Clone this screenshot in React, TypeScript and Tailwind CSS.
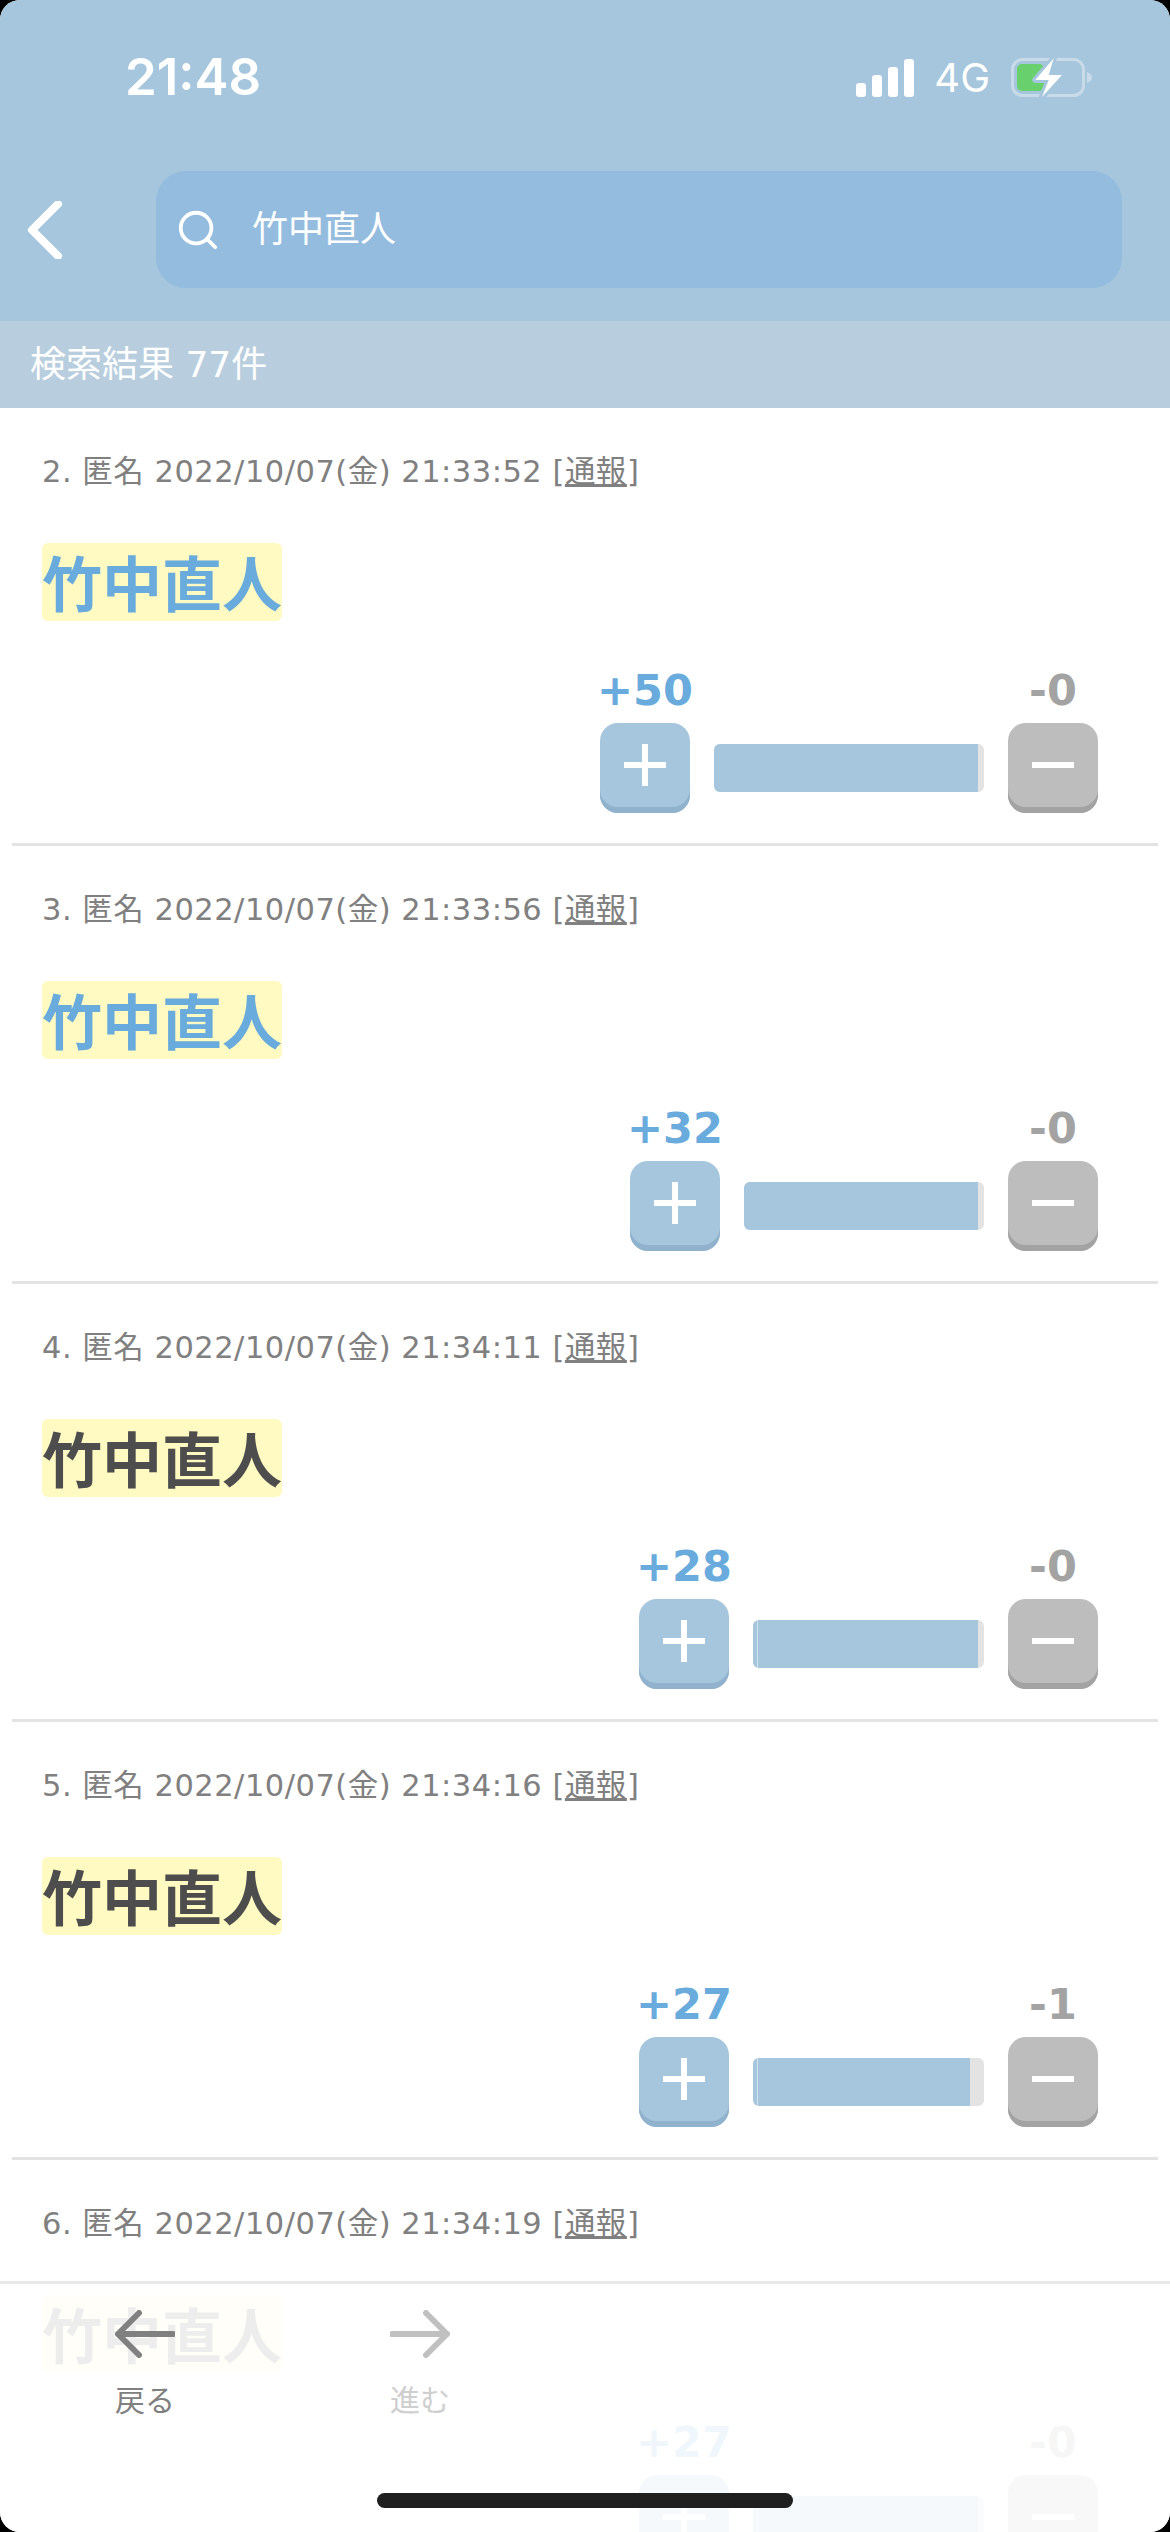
import { Search } from "lucide-react";

type Post = {
  no: number;
  time: string;
  up: number;
  down: number;
  blue: boolean;
  seam: boolean;
  barWidth: string;
  fillWidth: string;
};

const posts: Post[] = [
  { no: 2, time: "21:33:52", up: 50, down: 0, blue: true, seam: false, barWidth: "w-[270px]", fillWidth: "w-[264px]" },
  { no: 3, time: "21:33:56", up: 32, down: 0, blue: true, seam: false, barWidth: "w-[240px]", fillWidth: "w-[234px]" },
  { no: 4, time: "21:34:11", up: 28, down: 0, blue: false, seam: true, barWidth: "w-[231px]", fillWidth: "w-[225px]" },
  { no: 5, time: "21:34:16", up: 27, down: 1, blue: false, seam: true, barWidth: "w-[231px]", fillWidth: "w-[217px]" },
  { no: 6, time: "21:34:19", up: 27, down: 0, blue: false, seam: true, barWidth: "w-[231px]", fillWidth: "w-[225px]" },
];

const jp = "font-['DejaVu_Sans','Noto_Sans_CJK_JP',sans-serif]";

const StatusBar = () => (
  <div className="flex h-[171px] items-start justify-between pl-[125px] pr-[78px] pt-[51px] text-white">
    <span className="font-['Inter',sans-serif] text-[51px] leading-[52px] font-semibold">21:48</span>
    <div className="mt-[6px] flex items-center">
      <svg width="58" height="38" viewBox="0 0 58 38" fill="#fff">
        <rect x="0" y="24" width="10" height="14" rx="3" />
        <rect x="16" y="16" width="10" height="22" rx="3" />
        <rect x="32" y="8" width="10" height="30" rx="3" />
        <rect x="48" y="0" width="10" height="38" rx="3" />
      </svg>
      <span className="ml-[20px] font-['Inter',sans-serif] text-[40px] leading-[40px]">4G</span>
      <svg className="ml-[21px]" width="81" height="42" viewBox="0 0 81 42">
        <rect x="1.5" y="2.5" width="71" height="36" rx="10" fill="none" stroke="#c9dae8" strokeWidth="3" />
        <path d="M76 15c3 1 5 3 5 5.500s-2 4.500-5 5.500z" fill="#c9dae8" />
        <rect x="6" y="7" width="27" height="27" rx="5" fill="#68d06c" />
        <path
          d="M42.700 1.300 24.300 23h13.400L31 40l20-22H37.700z"
          fill="#fff"
          stroke="#a5c6dd"
          strokeWidth="6"
          strokeLinejoin="round"
          paintOrder="stroke"
        />
      </svg>
    </div>
  </div>
);

const SearchHeader = () => (
  <div className="flex h-[150px] items-start pl-[27px] pr-[48px]">
    <svg className="mt-[30px]" width="36" height="58" viewBox="0 0 36 58" fill="none">
      <path d="M31 3 5 29l26 26" stroke="#fff" strokeWidth="8" strokeLinecap="round" strokeLinejoin="round" />
    </svg>
    <div className="ml-[93px] flex h-[117px] flex-1 items-center rounded-[30px] bg-[#93bcde] pl-[19px]">
      <Search className="text-white" size={46} strokeWidth={2} />
      <span className={`ml-[31px] text-[36px] text-white ${jp}`}>竹中直人</span>
    </div>
  </div>
);

const Vote = ({ post }: { post: Post }) => (
  <div className="flex items-end justify-end pr-[60px]">
    <div className="flex w-[90px] flex-col items-center">
      <span className="whitespace-nowrap font-['DejaVu_Sans',sans-serif] text-[43px] leading-[50px] font-bold text-[#68abdc]">
        +{post.up}
      </span>
      <div className="mt-[8px] flex h-[90px] w-[90px] items-center justify-center rounded-[18px] bg-[#a5c6dd] pb-[6px] shadow-[inset_0_-6px_0_#90b2cc]">
        <svg width="42" height="42" viewBox="0 0 42 42" fill="#fff">
          <rect x="0" y="18" width="42" height="6" />
          <rect x="18" y="0" width="6" height="42" />
        </svg>
      </div>
    </div>
    <div className={`mx-[24px] mb-[21px] h-[48px] overflow-hidden rounded-[6px] bg-[#e3e3e3] ${post.barWidth}`}>
      <div className={`h-full bg-[#a5c6dd] ${post.fillWidth}`}>
        {post.seam && <div className="h-full w-[5px] border-r border-white/50" />}
      </div>
    </div>
    <div className="flex w-[90px] flex-col items-center">
      <span className="font-['DejaVu_Sans',sans-serif] text-[43px] leading-[50px] font-bold text-[#a3a3a3]">
        -{post.down}
      </span>
      <div className="mt-[8px] flex h-[90px] w-[90px] items-center justify-center rounded-[18px] bg-[#bdbdbd] pb-[6px] shadow-[inset_0_-6px_0_#a3a3a3]">
        <div className="h-[6px] w-[42px] bg-white" />
      </div>
    </div>
  </div>
);

const PostRow = ({ post }: { post: Post }) => (
  <div className="mx-[12px] h-[438px] shrink-0 border-b-[3px] border-[#e3e3e3] pl-[30px] pt-[44px]">
    <p className={`whitespace-nowrap text-[30.500px] leading-[40px] tracking-[0.5px] text-[#808080] ${jp}`}>
      {post.no}. 匿名 2022/10/07(金) {post.time} [<span className="underline">通報</span>]
    </p>
    <div className="mt-[51px] h-[78px] w-[240px] rounded-[6px] bg-[#fff9c2]">
      <span
        className={`block whitespace-nowrap font-['Noto_Sans_CJK_JP',sans-serif] text-[60px] leading-[76px] font-bold ${post.blue ? "text-[#68abdc]" : "text-[#4d4d4d]"}`}
      >
        竹中直人
      </span>
    </div>
    <div className="mt-[44px] -ml-[30px]">
      <Vote post={post} />
    </div>
  </div>
);

const BottomNav = () => (
  <div className="absolute inset-x-0 bottom-0 h-[251px] border-t-[3px] border-[#e8e8e8] bg-white/90">
    <div className="flex pl-[115px] pt-[26px]">
      <div className="flex w-[60px] flex-col items-center">
        <svg width="60" height="48" viewBox="0 0 60 48" fill="none" stroke="#808080" strokeWidth="6" strokeLinecap="round" strokeLinejoin="round">
          <path d="M24 3 3 24l21 21M3 24h55" />
        </svg>
        <span className={`mt-[23px] whitespace-nowrap text-[30px] leading-[40px] text-[#808080] ${jp}`}>戻る</span>
      </div>
      <div className="ml-[215px] flex w-[60px] flex-col items-center">
        <svg width="60" height="48" viewBox="0 0 60 48" fill="none" stroke="#c0c0c0" strokeWidth="6" strokeLinecap="round" strokeLinejoin="round">
          <path d="m36 3 21 21-21 21M57 24H2" />
        </svg>
        <span className={`mt-[23px] whitespace-nowrap text-[30px] leading-[40px] text-[#cfcfcf] ${jp}`}>進む</span>
      </div>
    </div>
    <div className="absolute bottom-[24px] left-[377px] h-[15px] w-[416px] rounded-full bg-[#1f1f1f]" />
  </div>
);

export default function App() {
  return (
    <div className="h-[2532px] w-[1170px] bg-black">
      <div className="relative flex h-full flex-col overflow-hidden rounded-[20px] bg-white">
        <div className="h-[321px] shrink-0 bg-[#a5c6dd]">
          <StatusBar />
          <SearchHeader />
        </div>
        <div className={`flex h-[87px] shrink-0 items-center bg-[#b8cede] pl-[30px] text-[36px] text-white ${jp}`}>
          検索結果 77件
        </div>
        {posts.map((post) => (
          <PostRow key={post.no} post={post} />
        ))}
        <BottomNav />
      </div>
    </div>
  );
}
